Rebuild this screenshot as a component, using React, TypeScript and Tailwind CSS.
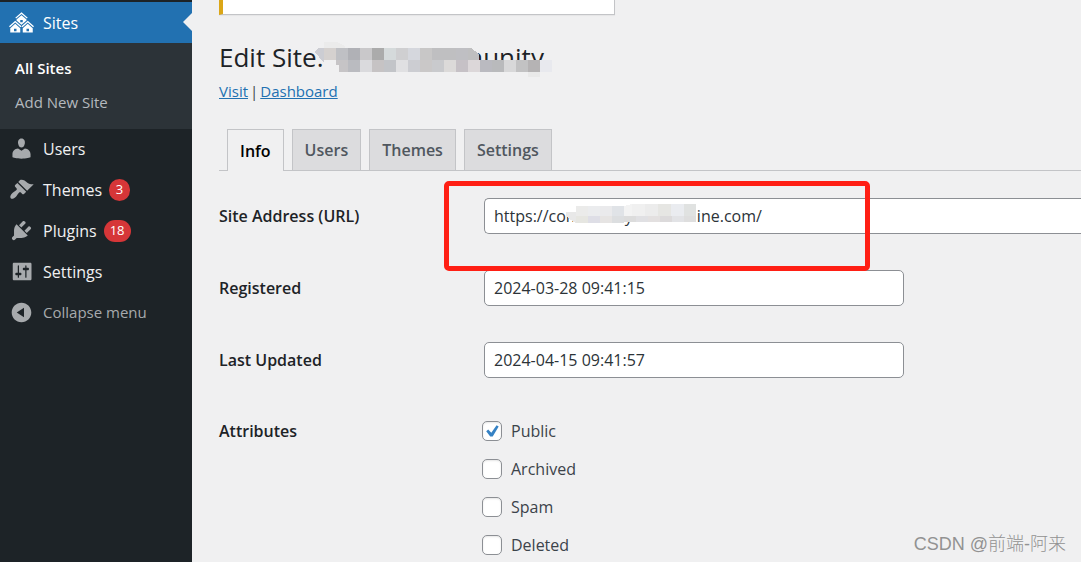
import type { ReactNode } from "react";

const ICONS = {
  sites:
    "M14.27 6.87L10 3.14 5.73 6.87 5 6.14l5-4.38 5 4.38zM14 8.42l-4.05 3.43L6 8.38v-.74l4-3.5 4 3.5v.78zM11 9.7V8H9v1.7h2zm-1.73 4.03L5 10 .73 13.73 0 13l5-4.38L10 13zm10 0L15 10l-4.27 3.73L10 13l5-4.38L20 13zM5 11l4 3.5V18H1v-3.5zm10 0l4 3.5V18h-8v-3.5zm-9 6v-2H4v2h2zm10 0v-2h-2v2h2z",
  users:
    "M10 9.25c-2.27 0-2.73-3.44-2.73-3.44C7 4.02 7.82 2 9.97 2c2.16 0 2.98 2.02 2.71 3.81 0 0-.41 3.44-2.68 3.44zm0 2.57L12.72 10c2.39 0 4.52 2.33 4.52 4.53v2.49s-3.65 1.13-7.24 1.13c-3.65 0-7.24-1.13-7.24-1.13v-2.49c0-2.25 1.94-4.48 4.47-4.48z",
  themes:
    "M14.48 11.06L7.41 3.99l1.5-1.5c.5-.56 2.3-.47 3.51.32 1.21.8 1.43 1.28 2.91 2.1 1.18.64 2.45 1.26 4.45.85zm-.71.71L6.7 4.7 4.93 6.47c-.39.39-.39 1.02 0 1.41l1.06 1.06c.39.39.39 1.03 0 1.42-.6.6-1.43 1.11-2.21 1.69-.35.26-.7.53-1.01.84C1.43 14.23.4 16.08 1.4 17.07c.99 1 2.84-.03 4.18-1.36.31-.31.58-.66.85-1.02.57-.78 1.08-1.61 1.69-2.21.39-.39 1.02-.39 1.41 0l1.06 1.06c.39.39 1.02.39 1.41 0z",
  plugins:
    "M13.11 4.36L9.87 7.6 8 5.73l3.24-3.24c.35-.34 1.05-.2 1.56.32.52.51.66 1.21.31 1.55zm-8 1.77l.91-1.12 9.01 9.01-1.19.84c-.71.71-2.63 1.16-3.82 1.16H6.14L4.9 17.26c-.59.59-1.54.59-2.12 0-.59-.58-.59-1.53 0-2.12l1.24-1.24v-3.88c0-1.13.4-3.19 1.09-3.89zm7.26 3.97l3.24-3.24c.34-.35 1.04-.21 1.55.31.52.51.66 1.21.31 1.55l-3.24 3.25z",
  settings:
    "M18 16V4c0-.55-.45-1-1-1H4c-.55 0-1 .45-1 1v12c0 .55.45 1 1 1h13c.55 0 1-.45 1-1zM8 11h1c.55 0 1 .45 1 1s-.45 1-1 1H8v1.5c0 .28-.22.5-.5.5s-.5-.22-.5-.5V13H6c-.55 0-1-.45-1-1s.45-1 1-1h1V5.5c0-.28.22-.5.5-.5s.5.22.5.5V11zm5-2h-1c-.55 0-1-.45-1-1s.45-1 1-1h1V5.5c0-.28.22-.5.5-.5s.5.22.5.5V7h1c.55 0 1 .45 1 1s-.45 1-1 1h-1v5.5c0 .28-.22.5-.5.5s-.5-.22-.5-.5V9z",
  collapse:
    "M10 2.16c4.33 0 7.84 3.51 7.84 7.84s-3.51 7.84-7.84 7.84S2.16 14.33 2.16 10 5.67 2.16 10 2.16zm2 11.72V6.12L6.18 9.97z",
};

function Icon({ name }: { name: keyof typeof ICONS }) {
  return (
    <svg viewBox="0 0 20 20" className="size-[25px] shrink-0" fill="currentColor" fillRule="evenodd" aria-hidden="true">
      <path d={ICONS[name]} />
    </svg>
  );
}

function MenuLink({ icon, label, count }: { icon: keyof typeof ICONS; label: string; count?: number }) {
  return (
    <a href="#" className="flex h-[41px] items-center pl-[9px] text-[#a7aaad]">
      <Icon name={icon} />
      <span className="ml-[9px] text-[#f0f0f1]">{label}</span>
      {count !== undefined && (
        <span className="ml-[7px] flex h-[22px] min-w-[21px] items-center justify-center rounded-full bg-[#d63638] px-1.5 text-[13px] text-white">
          {count}
        </span>
      )}
    </a>
  );
}

function Tab({ label, active = false }: { label: string; active?: boolean }) {
  return (
    <a
      href="#"
      className={
        active
          ? "-mb-px flex h-[42px] items-center border border-b-0 border-[#c3c4c7] bg-[#f0f0f1] px-3 font-semibold text-black"
          : "flex h-[41px] items-center border border-b-0 border-[#c3c4c7] bg-[#dcdcde] px-3 font-semibold text-[#50575e]"
      }
    >
      {label}
    </a>
  );
}

function Row({ id, label, children }: { id: string; label: string; children: ReactNode }) {
  return (
    <div className="flex h-9 items-center">
      <label htmlFor={id} className="w-[265px] shrink-0 font-semibold text-[#1d2327]">
        {label}
      </label>
      {children}
    </div>
  );
}

function Check({ label, checked = false }: { label: string; checked?: boolean }) {
  return (
    <label className="flex h-[38px] items-center gap-[9px] text-[#3c434a]">
      <span className="relative flex size-5">
        <input
          type="checkbox"
          defaultChecked={checked}
          className="peer size-5 appearance-none rounded-[5px] border border-[#8c8f94] bg-white shadow-[inset_0_1px_2px_rgba(0,0,0,0.1)]"
        />
        <svg
          viewBox="0 0 20 20"
          className="pointer-events-none absolute inset-0 hidden size-5 peer-checked:block"
          fill="#3582c4"
          aria-hidden="true"
        >
          <path d="M14.6 4.2l2.1 1.2-6 10.2H8.2L4.2 10.2l2-1.7 3.1 3.3z" />
        </svg>
      </span>
      {label}
    </label>
  );
}

const TITLE_TOP = ["#d5d1cf", "#bfc0c4", "#b0b1b6", "#c9c8ca", "#ababab", "#d5dadb", "#cfcfd1", "#d5d7dd", "#c8c7c7", "#bfbfc1", "#bfbfc1", "#bfbfc3"];
const TITLE_BOTTOM = ["#babbc0", "#dadadd", "#c6c3c4", "#c2c4c8", "#e0e0e2", "#cccdd2", "#cac8c8", "#c9cacd", "#dcdad9", "#c6c1c6", "#dcd7d9", "#babac0", "#b9babc", "#d8d8d9", "#c2c2c3", "#b5b3b4", "#e8e9ee"];
const URL_TOP = ["#ebebea", "#ebecee", "#eaeaec", "#e0e3e7"];
const URL_TOP_RIGHT = ["#f0f0f0", "#ececec", "#e6e6e3", "#eaecf0", "#e0e2e1"];
const URL_BOTTOM = ["#e6e6e1", "#dedee6", "#e6e4e3", "#dcdee0", "#dcdcdc", "#e0e0e3", "#e3e0e0", "#dcdadb", "#e2e3e6", "#dedede"];

function TitleMosaic() {
  return (
    <svg className="absolute left-[96px] top-px h-9 w-[240px]" viewBox="0 0 240 36" shapeRendering="crispEdges" aria-hidden="true">
      <path d="M9 0h13l8 4v2H9z" fill="#ebebeb" />
      <path d="M0 10l3-4h6v15z" fill="#cccdd3" />
      {TITLE_TOP.map((c, i) => (
        <rect key={i} x={9 + i * 12} y="6" width="12" height="12" fill={c} />
      ))}
      <path d="M153 6h3l8 6v6h-11z" fill="#bfbfc0" />
      <path d="M21 18h12v12h-9v-7h-3z" fill="#c6c4c6" />
      {TITLE_BOTTOM.map((c, i) => (
        <rect key={i} x={33 + i * 12} y="18" width="12" height="12" fill={c} />
      ))}
      <rect x="213" y="30" width="12" height="5" fill="#e9e9e9" />
    </svg>
  );
}

function UrlMosaic() {
  return (
    <svg className="pointer-events-none absolute left-[82px] top-1.5 h-5 w-[130px]" viewBox="0 0 130 20" shapeRendering="crispEdges" aria-hidden="true">
      <path d="M0 8h10v11l-5-3-5-4z" fill="#e8e8e8" />
      {URL_TOP.map((c, i) => (
        <rect key={i} x={10 + i * 12} y="2" width="12" height="10" fill={c} />
      ))}
      <path d="M58 2l8-2v12h-8z" fill="#f3f3f3" />
      {URL_TOP_RIGHT.map((c, i) => (
        <rect key={i} x={66 + i * 13} y="0" width={i === 4 ? 12 : 13} height="12" fill={c} />
      ))}
      {URL_BOTTOM.map((c, i) => (
        <rect key={i} x={10 + i * 12} y="12" width="12" height={i < 4 ? 7 : 6} fill={c} />
      ))}
    </svg>
  );
}

const FIELD = "h-9 rounded-[5px] border border-[#8c8f94] bg-white px-[9px] text-[#2c3338]";

export default function App() {
  return (
    <div className="relative flex min-h-screen overflow-hidden bg-[#f0f0f1] font-['Open_Sans','Noto_Sans',sans-serif] text-base">
      <nav className="w-48 shrink-0 bg-[#1d2327] pt-0.5" aria-label="Admin">
        <a href="#" className="relative flex h-[41px] items-center gap-[9px] bg-[#2271b1] pl-[9px] text-white">
          <Icon name="sites" />
          Sites
          <svg viewBox="0 0 9 18" className="absolute right-0 top-[11px] h-[18px] w-[9px]" fill="#f0f0f1" aria-hidden="true">
            <path d="M9 0v18L0 9z" />
          </svg>
        </a>
        <div className="flex flex-col bg-[#2c3338] pb-2.5 pt-2 pl-[15px] text-[15px]">
          <a href="#" className="flex h-[34px] items-center font-semibold text-white">All Sites</a>
          <a href="#" className="flex h-[34px] items-center text-[#b4b9be]">Add New Site</a>
        </div>
        <div className="-mt-px">
          <MenuLink icon="users" label="Users" />
          <MenuLink icon="themes" label="Themes" count={3} />
          <MenuLink icon="plugins" label="Plugins" count={18} />
          <MenuLink icon="settings" label="Settings" />
          <button type="button" className="flex h-[41px] w-full items-center gap-[9px] pl-[9px] text-[15px] text-[#a7aaad]">
            <Icon name="collapse" />
            Collapse menu
          </button>
        </div>
      </nav>

      <main className="min-w-0 flex-1 pl-[27px]">
        <div className="h-[15px] w-[396px] border border-l-4 border-t-0 border-[#c3c4c7] border-l-[#dba617] bg-white shadow-[0_1px_1px_rgba(0,0,0,0.04)]" />
        <h1 className="relative mt-[26px] flex h-8 items-center text-[26px] font-normal text-[#1d2327]">
          <span className="w-[184px]">Edit Site:</span>
          <span>Community</span>
          <TitleMosaic />
        </h1>
        <div className="mt-1.5 flex h-6 items-center gap-0.5 text-[15px] text-[#3c434a]">
          <a href="#" className="text-[#2271b1] underline">Visit</a>
          <span>|</span>
          <a href="#" className="text-[#2271b1] underline">Dashboard</a>
        </div>

        <div className="mt-[26px] flex gap-2 border-b border-[#c3c4c7] pl-2">
          <Tab label="Info" active />
          <Tab label="Users" />
          <Tab label="Themes" />
          <Tab label="Settings" />
        </div>

        <form className="flex flex-col gap-9 pt-[27px]">
          <Row id="url" label="Site Address (URL)">
            <div className="relative min-w-0 flex-1">
              <input
                id="url"
                type="text"
                defaultValue={"https://community\u2003\u2003\u2003\u2003ine.com/"}
                className="block h-9 w-full rounded-l-[5px] border border-r-0 border-[#8c8f94] bg-white px-[9px] text-[#2c3338]"
              />
              <UrlMosaic />
              <div className="pointer-events-none absolute -left-10 -top-[17px] h-[90px] w-[426px] rounded-[5px] border-5 border-[#ff1f14]" />
            </div>
          </Row>
          <Row id="registered" label="Registered">
            <input id="registered" type="text" defaultValue="2024-03-28 09:41:15" className={`${FIELD} w-[420px]`} />
          </Row>
          <Row id="updated" label="Last Updated">
            <input id="updated" type="text" defaultValue="2024-04-15 09:41:57" className={`${FIELD} w-[420px]`} />
          </Row>
          <fieldset className="-mb-4 -mt-0.5 flex items-start" aria-labelledby="attributes">
            <span id="attributes" className="flex h-[38px] w-[263px] shrink-0 items-center font-semibold text-[#1d2327]">
              Attributes
            </span>
            <div className="flex flex-col">
              <Check label="Public" checked />
              <Check label="Archived" />
              <Check label="Spam" />
              <Check label="Deleted" />
            </div>
          </fieldset>
        </form>
      </main>

      <p className="absolute bottom-1.5 right-[15px] font-['Liberation_Sans','Noto_Sans_CJK_SC',sans-serif] text-lg font-light leading-6 text-[#929292]">
        CSDN @前端-阿来
      </p>
    </div>
  );
}
